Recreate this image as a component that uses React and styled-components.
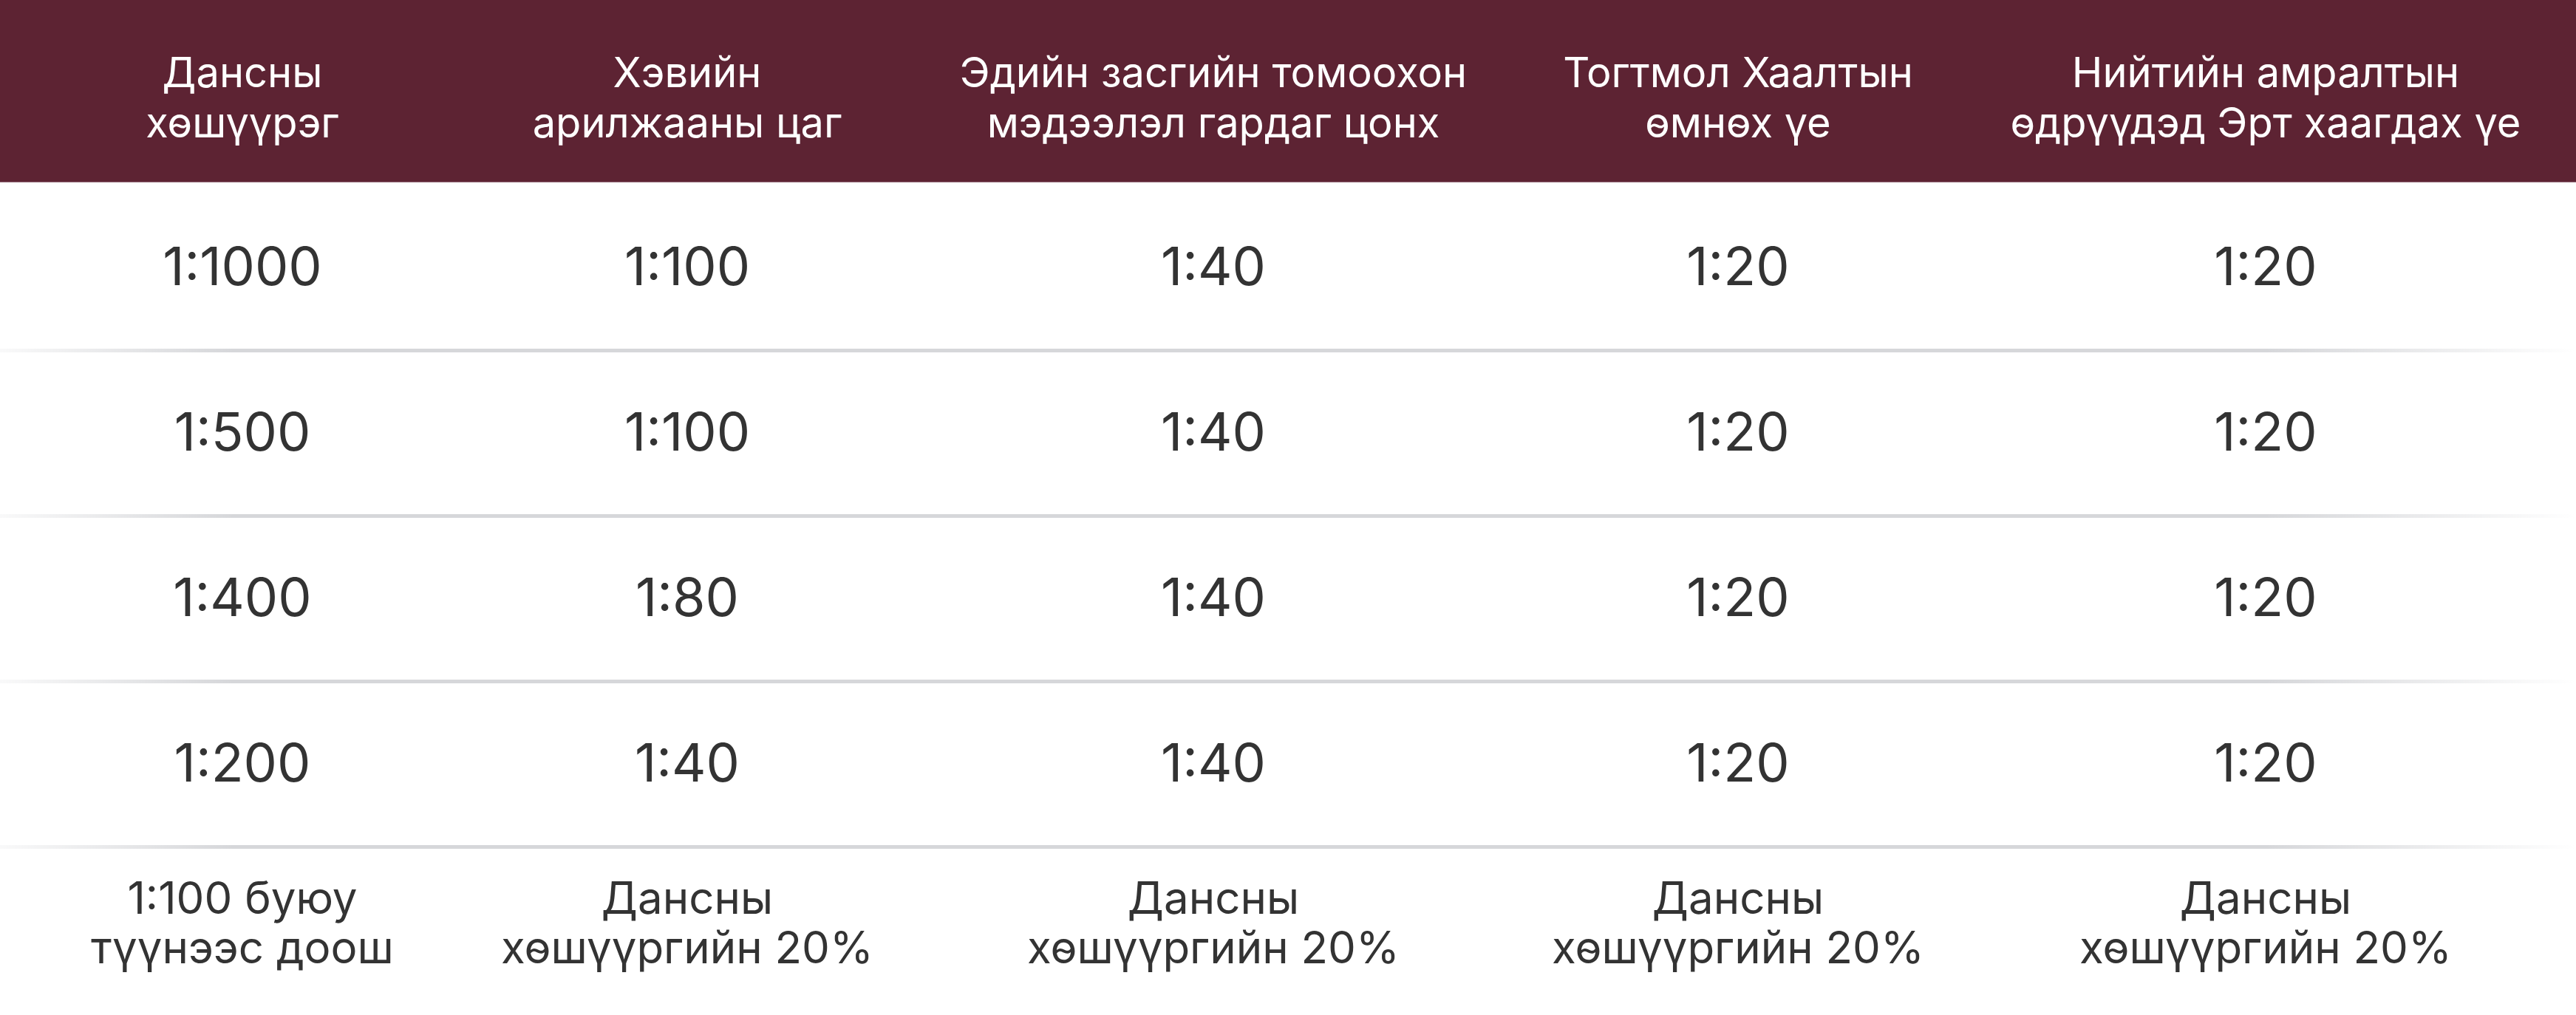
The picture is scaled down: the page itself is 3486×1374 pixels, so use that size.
import React from "react";
import styled, { createGlobalStyle } from "styled-components";

const GlobalStyle = createGlobalStyle`
  html, body {
    margin: 0;
    padding: 0;
    background: #ffffff;
    overflow: hidden;
  }
  body {
    font-family: Inter, "Noto Sans", "Liberation Sans", sans-serif;
  }
`;

const COLS = "656px 548px 876px 544px 884px";

const Table = styled.div`
  width: 3486px;
  display: flex;
  flex-direction: column;
  overflow: hidden;
`;

const HeaderRow = styled.div`
  display: grid;
  grid-template-columns: ${COLS};
  height: 247px;
  box-sizing: border-box;
  padding-top: 18px;
  background: #5d2333;
  border-bottom: 1px solid #9b7581;
  align-items: center;
`;

const HeaderCell = styled.div`
  color: #ffffff;
  font-size: 56px;
  line-height: 68px;
  font-weight: 400;
  text-align: center;
  white-space: nowrap;
`;

const Row = styled.div`
  display: grid;
  grid-template-columns: ${COLS};
  align-items: center;
  height: ${(p) => p.$h}px;
  box-sizing: border-box;
  padding-top: ${(p) => (p.$divider ? 5 : 0)}px;
  padding-bottom: ${(p) => p.$pb || 0}px;
  background: ${(p) =>
    p.$divider
      ? "linear-gradient(90deg, rgba(214,215,218,0.15) 0%, #d6d7da 9%, #d6d7da 88%, rgba(214,215,218,0) 100%) top / 100% 5px no-repeat"
      : "none"};
`;

const Cell = styled.div`
  color: #333333;
  font-size: ${(p) => (p.$small ? 60 : 72)}px;
  line-height: ${(p) => (p.$small ? 67 : 88)}px;
  font-weight: 400;
  text-align: center;
  white-space: nowrap;
`;

const headers = [
  ["Дансны", "хөшүүрэг"],
  ["Хэвийн", "арилжааны цаг"],
  ["Эдийн засгийн томоохон", "мэдээлэл гардаг цонх"],
  ["Тогтмол Хаалтын", "өмнөх үе"],
  ["Нийтийн амралтын", "өдрүүдэд Эрт хаагдах үе"],
];

const rows = [
  ["1:1000", "1:100", "1:40", "1:20", "1:20"],
  ["1:500", "1:100", "1:40", "1:20", "1:20"],
  ["1:400", "1:80", "1:40", "1:20", "1:20"],
  ["1:200", "1:40", "1:40", "1:20", "1:20"],
];

const lastRow = [
  ["1:100 буюу", "түүнээс доош"],
  ["Дансны", "хөшүүргийн 20%"],
  ["Дансны", "хөшүүргийн 20%"],
  ["Дансны", "хөшүүргийн 20%"],
  ["Дансны", "хөшүүргийн 20%"],
];

const Lines = ({ lines }) => (
  <>
    {lines[0]}
    <br />
    {lines[1]}
  </>
);

export default function App() {
  return (
    <>
      <GlobalStyle />
      <Table>
        <HeaderRow>
          {headers.map((h, i) => (
            <HeaderCell key={i}>
              <Lines lines={h} />
            </HeaderCell>
          ))}
        </HeaderRow>
        {rows.map((r, ri) => (
          <Row
            key={ri}
            $divider={ri > 0}
            $h={ri === 0 ? 225 : 224}
            $pb={ri === 0 ? 0 : 6}
          >
            {r.map((c, ci) => (
              <Cell key={ci}>{c}</Cell>
            ))}
          </Row>
        ))}
        <Row $divider $h={229} $pb={24}>
          {lastRow.map((c, ci) => (
            <Cell key={ci} $small>
              <Lines lines={c} />
            </Cell>
          ))}
        </Row>
      </Table>
    </>
  );
}
